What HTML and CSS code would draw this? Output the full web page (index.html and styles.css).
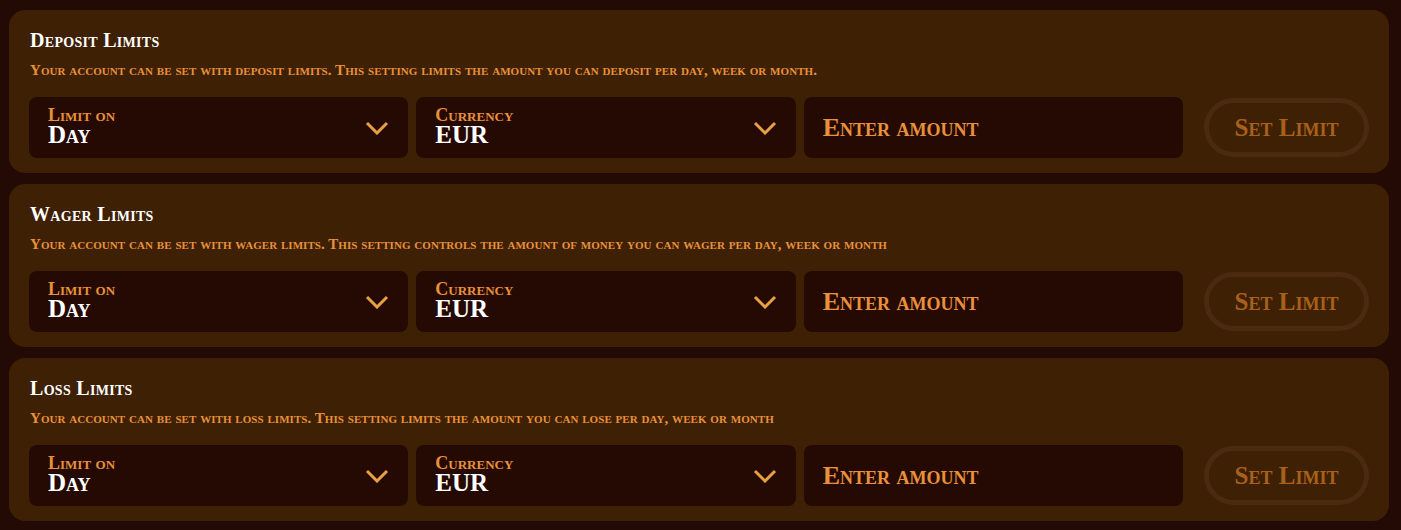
FILE: index.html
```html
<!DOCTYPE html>
<html>
<head>
<meta charset="utf-8">
<link rel="stylesheet" href="styles.css">
</head>
<body>
<div class="page">
  <section class="card">
    <h2 class="title">Deposit Limits</h2>
    <p class="desc">Your account can be set with deposit limits. This setting limits the amount you can deposit per day, week or month.</p>
    <div class="row">
      <div class="field select"><div class="txt"><span class="label">Limit on</span><span class="value">Day</span></div><svg class="chev" viewBox="0 0 24 14"><path d="M2 2 L12 12 L22 2"/></svg></div>
      <div class="field select"><div class="txt"><span class="label">Currency</span><span class="value">EUR</span></div><svg class="chev" viewBox="0 0 24 14"><path d="M2 2 L12 12 L22 2"/></svg></div>
      <div class="field input"><span class="placeholder">Enter amount</span></div>
      <button class="btn">Set Limit</button>
    </div>
  </section>
  <section class="card">
    <h2 class="title">Wager Limits</h2>
    <p class="desc">Your account can be set with wager limits. This setting controls the amount of money you can wager per day, week or month</p>
    <div class="row">
      <div class="field select"><div class="txt"><span class="label">Limit on</span><span class="value">Day</span></div><svg class="chev" viewBox="0 0 24 14"><path d="M2 2 L12 12 L22 2"/></svg></div>
      <div class="field select"><div class="txt"><span class="label">Currency</span><span class="value">EUR</span></div><svg class="chev" viewBox="0 0 24 14"><path d="M2 2 L12 12 L22 2"/></svg></div>
      <div class="field input"><span class="placeholder">Enter amount</span></div>
      <button class="btn">Set Limit</button>
    </div>
  </section>
  <section class="card">
    <h2 class="title">Loss Limits</h2>
    <p class="desc">Your account can be set with loss limits. This setting limits the amount you can lose per day, week or month</p>
    <div class="row">
      <div class="field select"><div class="txt"><span class="label">Limit on</span><span class="value">Day</span></div><svg class="chev" viewBox="0 0 24 14"><path d="M2 2 L12 12 L22 2"/></svg></div>
      <div class="field select"><div class="txt"><span class="label">Currency</span><span class="value">EUR</span></div><svg class="chev" viewBox="0 0 24 14"><path d="M2 2 L12 12 L22 2"/></svg></div>
      <div class="field input"><span class="placeholder">Enter amount</span></div>
      <button class="btn">Set Limit</button>
    </div>
  </section>
</div>
</body>
</html>
```

FILE: styles.css
```css
html, body {
  margin: 0;
  background: #240a05;
}
body {
  font-family: "Liberation Serif", "DejaVu Serif", serif;
  font-variant: small-caps;
  font-weight: bold;
}
.page {
  display: flex;
  flex-direction: column;
  gap: 11px;
  padding: 10px 12px 9px 9px;
}
.card {
  background: #3e2004;
  border-radius: 16px;
  padding: 18px 20px 15px 20px;
}
.title {
  margin: 0 0 0 1px;
  font-size: 20px;
  line-height: 24px;
  letter-spacing: 0.3px;
  color: #ffffff;
  font-weight: bold;
}
.desc {
  margin: 9px 0 0 1px;
  font-size: 15px;
  line-height: 18px;
  letter-spacing: 0.05px;
  color: #e8913a;
}
.row {
  display: flex;
  gap: 8px;
  margin-top: 18px;
  align-items: center;
}
.field {
  flex: 1 1 0;
  height: 61px;
  background: #250a04;
  border-radius: 8px;
  display: flex;
  align-items: center;
  box-sizing: border-box;
  padding: 0 19px;
}
.select {
  justify-content: space-between;
}
.txt {
  display: flex;
  flex-direction: column;
  align-self: flex-start;
  margin-top: 10px;
}
.label {
  font-size: 18px;
  line-height: 16px;
  color: #e8913a;
}
.value {
  font-size: 25px;
  line-height: 24px;
  color: #ffffff;
}
.chev {
  width: 24px;
  height: 14px;
  fill: none;
  stroke: #e8a040;
  stroke-width: 3;
}
.placeholder {
  font-size: 26px;
  color: #e8913a;
}
.btn {
  flex: 0 0 165px;
  margin-left: 13px;
  height: 59px;
  box-sizing: border-box;
  border: 5px solid #4b2a12;
  border-radius: 30px;
  background: transparent;
  font-family: inherit;
  font-variant: small-caps;
  font-weight: bold;
  font-size: 25px;
  color: #a8601a;
  padding: 0;
}
```
